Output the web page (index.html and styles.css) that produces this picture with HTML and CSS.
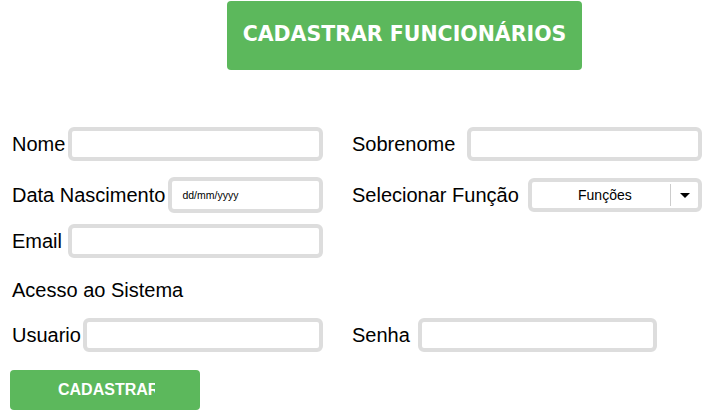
FILE: index.html
```html
<!DOCTYPE html>
<html lang="pt-BR">
<head>
<meta charset="utf-8">
<title>Cadastrar Funcionários</title>
<link rel="stylesheet" href="styles.css">
</head>
<body>
<div class="page">
  <div class="title-wrap">
    <h1 class="title">CADASTRAR FUNCIONÁRIOS</h1>
  </div>
  <form class="form">
    <div class="row row-1">
      <div class="col col-left">
        <label class="label">Nome</label>
        <input class="field" type="text">
      </div>
      <div class="col col-right gap-sobrenome">
        <label class="label">Sobrenome</label>
        <input class="field" type="text">
      </div>
    </div>
    <div class="row row-2">
      <div class="col col-left">
        <label class="label">Data Nascimento</label>
        <input class="field field-date" type="text" placeholder="dd/mm/yyyy">
      </div>
      <div class="col col-right gap-funcao">
        <label class="label">Selecionar Função</label>
        <div class="select">
          <span class="select-text">Funções</span>
          <span class="select-caret"></span>
        </div>
      </div>
    </div>
    <div class="row row-3">
      <div class="col col-left gap-email">
        <label class="label">Email</label>
        <input class="field" type="email">
      </div>
    </div>
    <p class="section">Acesso ao Sistema</p>
    <div class="row row-5">
      <div class="col col-left gap-usuario">
        <label class="label">Usuario</label>
        <input class="field" type="text">
      </div>
      <div class="col col-right gap-senha">
        <label class="label">Senha</label>
        <input class="field field-senha" type="password">
      </div>
    </div>
    <button class="submit" type="button"><span class="submit-text">CADASTRAR</span></button>
  </form>
</div>
</body>
</html>
```
FILE: styles.css
```css
html, body {
  margin: 0;
  padding: 0;
  background: #fff;
}
body {
  font-family: "Liberation Sans", Arial, sans-serif;
  color: #000;
  overflow: hidden;
}
.page {
  width: 703px;
}
.title-wrap {
  padding-top: 1px;
  padding-left: 227px;
}
.title {
  margin: 0;
  width: 355px;
  height: 69px;
  box-sizing: border-box;
  background: #5cb85c;
  border-radius: 4px;
  color: #fff;
  font-family: "DejaVu Sans", Verdana, sans-serif;
  font-weight: bold;
  font-size: 20.5px;
  display: flex;
  align-items: center;
  justify-content: center;
  padding-bottom: 4px;
}
.form {
  padding-left: 12px;
  margin-top: 57px;
}
.row {
  display: flex;
}
.row-2 { margin-top: 16px; }
.row-3 { margin-top: 11px; }
.row-5 { margin-top: 0; }
.col {
  display: flex;
  align-items: center;
  gap: 3px;
}
.col-left {
  width: 311px;
}
.col-right {
  margin-left: 29px;
  width: 350px;
}
.gap-sobrenome { gap: 12px; }
.gap-funcao { gap: 9px; }
.gap-email { gap: 6px; }
.gap-usuario { gap: 2px; }
.gap-senha { gap: 8px; }
.label {
  font-size: 20px;
  white-space: nowrap;
}
.field {
  flex: 1;
  min-width: 0;
  height: 34px;
  box-sizing: border-box;
  border: 4px solid #dddddd;
  border-radius: 6px;
  background: #fff;
  outline: none;
  padding: 0 6px;
  font-family: "Liberation Sans", Arial, sans-serif;
}
.field-date {
  height: 36px;
  font-size: 10.5px;
  padding-left: 10px;
}
.field-date::placeholder {
  color: #000;
}
.field-senha {
  flex: none;
  width: 239px;
}
.select {
  flex: 1;
  height: 34px;
  box-sizing: border-box;
  border: 4px solid #dddddd;
  border-radius: 6px;
  display: flex;
  align-items: stretch;
  background: #fff;
}
.select-text {
  flex: 1;
  display: flex;
  align-items: center;
  justify-content: center;
  font-size: 14px;
  border-right: 1px solid #ccc;
  margin: 2px 0;
  padding-left: 8px;
}
.select-caret {
  width: 27px;
  display: flex;
  align-items: center;
  justify-content: center;
}
.select-caret::before {
  content: "";
  border-left: 5px solid transparent;
  border-right: 5px solid transparent;
  border-top: 5px solid #000;
}
.section {
  margin: 21px 0 16px;
  font-size: 20px;
}
.submit {
  margin-top: 18px;
  margin-left: -2px;
  width: 190px;
  height: 40px;
  border: none;
  border-radius: 4px;
  background: #5cb85c;
  color: #fff;
  font-family: "Liberation Sans", Arial, sans-serif;
  font-weight: bold;
  font-size: 16px;
  padding: 0 0 0 48px;
  text-align: left;
  display: flex;
  align-items: center;
}
.submit-text {
  display: block;
  width: 97px;
  overflow: hidden;
  white-space: nowrap;
}
```
